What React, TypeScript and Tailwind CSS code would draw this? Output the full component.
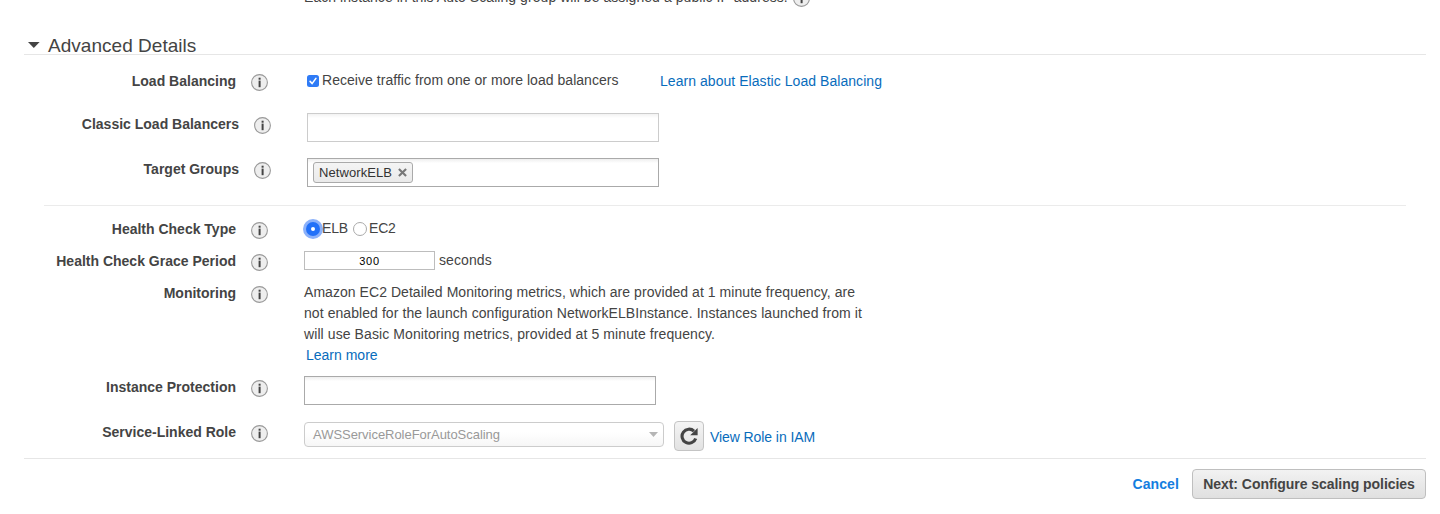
import type { ReactNode } from "react";

function InfoIcon() {
  return (
    <svg className="block h-[18px] w-[18px] shrink-0" viewBox="0 0 18 18">
      <circle cx="9.5" cy="9.5" r="7.9" fill="#eee" stroke="#999" strokeWidth="1.1" />
      <rect x="8.6" y="4.7" width="2" height="2" fill="#444" />
      <rect x="8.6" y="7.6" width="2" height="6.6" fill="#444" />
    </svg>
  );
}

type RowProps = { label: string; height: string; shifted?: boolean; children: ReactNode };

function Row({ label, height, shifted = false, children }: RowProps) {
  return (
    <div className={`flex items-start ${height}`}>
      <div className={`shrink-0 text-right font-bold leading-[22px] ${shifted ? "w-[239px]" : "w-[236px]"}`}>
        {label}
      </div>
      <div className="w-[68px] shrink-0 pl-[14px] pt-[3px]">
        <InfoIcon />
      </div>
      <div className="flex min-w-0 items-start">{children}</div>
    </div>
  );
}

export default function App() {
  return (
    <div
      className="flex h-[514px] w-[1440px] flex-col overflow-hidden bg-white text-[14px] text-[#444]"
      style={{ fontFamily: '"Liberation Sans", Arial, sans-serif' }}
    >
      <div className="-mt-[13px] flex h-[43px] shrink-0 items-start pl-[304px]">
        <span className="w-[488px] whitespace-nowrap leading-[21px] tracking-[0.06px]">
          Each instance in this Auto Scaling group will be assigned a public IP address.
        </span>
        <div className="pt-[2px]"><InfoIcon /></div>
      </div>

      <div className="ml-[24px] mr-[14px] flex h-[25px] shrink-0 items-start border-b border-[#e6e6e6]">
        <svg className="ml-[4px] mt-[11px] h-[7px] w-[12px] shrink-0" viewBox="0 0 12 7">
          <path d="M0 1h11.6L5.8 7z" fill="#444" />
        </svg>
        <h2 className="pl-[8px] text-[19px] leading-[31px] tracking-[0.03px]">Advanced Details</h2>
      </div>

      <div className="mt-[15px] flex shrink-0 flex-col">
        <Row label="Load Balancing" height="h-[43px]">
          <div className="ml-[3px] mt-[5px] flex h-[12px] w-[12px] items-center justify-center rounded-[2.5px] bg-[#2f7bf6]">
            <svg className="h-[12px] w-[12px]" viewBox="0 0 12 12">
              <path d="M3.1 6.4 5.1 8.6 8.9 3.4" fill="none" stroke="#fff" strokeWidth="1.6" strokeLinecap="round" />
            </svg>
          </div>
          <span className="ml-[3px] w-[338px] whitespace-nowrap leading-[20px] tracking-[0.04px]">
            Receive traffic from one or more load balancers
          </span>
          <a className="whitespace-nowrap leading-[22px] tracking-[0.05px] text-[#086cbc]">Learn about Elastic Load Balancing</a>
        </Row>
        <Row label="Classic Load Balancers" height="h-[45px]" shifted>
          <div className="h-[29px] w-[352px] border border-[#ccc] bg-linear-to-b from-[#f2f2f2] to-white to-15%" />
        </Row>
        <Row label="Target Groups" height="h-[47px]" shifted>
          <div className="h-[29px] w-[352px] border border-[#aaa] bg-linear-to-b from-[#eee] to-white to-15% pl-[5px] pt-[3px]">
            <div className="flex h-[21px] w-[100px] items-center rounded-[3px] border border-[#aaa] bg-linear-to-b from-[#f4f4f4] to-[#eaeaea] pl-[5px] text-[13px] text-[#333]">
              <span className="w-[79px] leading-[19px] tracking-[0.08px]">NetworkELB</span>
              <svg className="h-[9px] w-[9px]" viewBox="0 0 9 9">
                <path d="M.9.9 8.1 8.1M8.1.9.9 8.1" stroke="#777" strokeWidth="2.1" />
              </svg>
            </div>
          </div>
        </Row>
      </div>

      <div className="ml-[44px] mr-[34px] h-px shrink-0 bg-[#ebebeb]" />

      <div className="mt-[12px] flex shrink-0 flex-col">
        <Row label="Health Check Type" height="h-[32px]">
          <div className="-ml-px mt-[1px] flex h-[20px] w-[20px] items-center justify-center rounded-full bg-[#8bb1fa]">
            <div className="flex h-[14px] w-[14px] items-center justify-center rounded-full bg-[#2170f8]">
              <div className="h-[4px] w-[4px] rounded-full bg-white" />
            </div>
          </div>
          <span className="-ml-px w-[31px] leading-[21px] tracking-[-0.2px]">ELB</span>
          <div className="mt-[4px] h-[14px] w-[14px] rounded-full border border-[#aaa]" />
          <span className="ml-[2px] leading-[21px] tracking-[-0.2px]">EC2</span>
        </Row>
        <Row label="Health Check Grace Period" height="h-[32px]">
          <div className="mt-px h-[19px] w-[131px] border border-[#bdbdbd] text-center text-[11px] leading-[18px] tracking-[0.7px] text-black">
            300
          </div>
          <span className="ml-[4px] leading-[20px] tracking-[0.1px]">seconds</span>
        </Row>
        <Row label="Monitoring" height="h-[94px]">
          <p className="whitespace-nowrap leading-[21px]">
            <span className="tracking-[0.05px]">Amazon EC2 Detailed Monitoring metrics, which are provided at 1 minute frequency, are</span>
            <br />
            <span className="tracking-[0.07px]">not enabled for the launch configuration NetworkELBInstance. Instances launched from it</span>
            <br />
            <span className="tracking-[0.09px]">will use Basic Monitoring metrics, provided at 5 minute frequency.</span>
            <br />
            <a className="ml-[2px] text-[#086cbc]">Learn more</a>
          </p>
        </Row>
        <Row label="Instance Protection" height="h-[45px]">
          <div className="h-[29px] w-[352px] border border-[#aaa] bg-linear-to-b from-[#eee] to-white to-15%" />
        </Row>
        <Row label="Service-Linked Role" height="h-[37px]">
          <div className="mt-px flex h-[25px] w-[360px] items-center justify-between rounded-[4px] border border-[#ccc] bg-linear-to-b from-white from-40% to-[#f6f6f6] pl-[8px] pr-[5px] text-[13px] text-[#999]">
            <span className="tracking-[-0.04px]">AWSServiceRoleForAutoScaling</span>
            <svg className="h-[5px] w-[9px]" viewBox="0 0 9 5">
              <path d="M0 0h9L4.5 5z" fill="#b5b5b5" />
            </svg>
          </div>
          <div className="ml-[10px] flex h-[30px] w-[30px] items-center justify-center rounded-[4px] border border-[#c4c4c4] bg-linear-to-b from-[#f4f4f4] to-[#e2e2e2]">
            <svg className="h-[18px] w-[18px]" viewBox="0 0 18 18">
              <path d="M15.7 11.4A7 7 0 1 1 14 4.2" fill="none" stroke="#444" strokeWidth="3.1" />
              <path d="M17.6 .9v7.3h-7.4z" fill="#444" />
            </svg>
          </div>
          <a className="ml-[6px] mt-[5px] whitespace-nowrap leading-[22px] tracking-[-0.08px] text-[#086cbc]">View Role in IAM</a>
        </Row>
      </div>

      <div className="ml-[24px] mr-[14px] flex shrink-0 items-center justify-end border-t border-[#e6e6e6] pt-[10px] font-bold">
        <a className="mr-[13px] tracking-[0.1px] text-[#147ee0]">Cancel</a>
        <button className="h-[30px] w-[234px] whitespace-nowrap rounded-[4px] border border-[#bfbfbf] bg-linear-to-b from-[#f2f2f2] to-[#e0e0e0] font-bold tracking-[-0.05px]">
          Next: Configure scaling policies
        </button>
      </div>
    </div>
  );
}
